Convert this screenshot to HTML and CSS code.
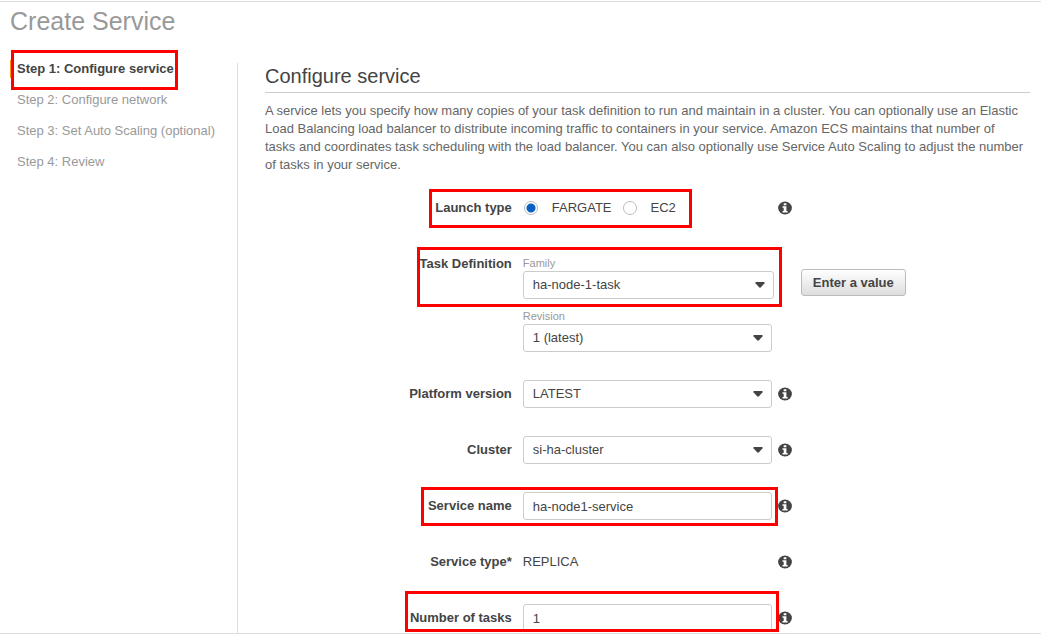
FILE: index.html
```html
<!DOCTYPE html>
<html lang="en">
<head>
<meta charset="utf-8">
<title>Create Service</title>
<link rel="stylesheet" href="styles.css">
</head>
<body>
<svg class="defs" aria-hidden="true">
  <symbol id="info" viewBox="0 0 14 14">
    <ellipse cx="7" cy="7" rx="6.9" ry="6.5" fill="#444"/>
    <path d="M5.700 2.200h2.700v2H5.700zM4.500 5.200h3.900v4.700h1.200v1.600H4.500V9.900h1.200V6.800H4.500z" fill="#fff"/>
  </symbol>
  <symbol id="caret" viewBox="0 0 10 6">
    <path d="M1 0h8q1 .2.500 1.200L6 5.200q-1 .9-2 0L.5 1.200Q0 .2 1 0z" fill="#444"/>
  </symbol>
</svg>
<div class="page">
  <h1 class="title">Create Service</h1>
  <div class="columns">
    <nav class="steps" aria-label="Steps">
      <ol class="step-list">
        <li class="step step-current" aria-current="step">Step 1: Configure service<span class="mark mark-step"></span></li>
        <li class="step">Step 2: Configure network</li>
        <li class="step">Step 3: Set Auto Scaling (optional)</li>
        <li class="step">Step 4: Review</li>
      </ol>
    </nav>
    <main class="content">
      <h2 class="heading">Configure service</h2>
      <p class="intro">A service lets you specify how many copies of your task definition to run and maintain in a cluster. You can optionally use an Elastic Load Balancing load balancer to distribute incoming traffic to containers in your service. Amazon ECS maintains that number of tasks and coordinates task scheduling with the load balancer. You can also optionally use Service Auto Scaling to adjust the number of tasks in your service.</p>
      <form class="form">
        <div class="row" role="radiogroup" aria-labelledby="launch">
          <span class="label" id="launch">Launch type</span>
          <div class="field radios">
            <label class="choice"><input class="radio" type="radio" name="launch" checked>FARGATE</label>
            <label class="choice"><input class="radio" type="radio" name="launch">EC2</label>
          </div>
          <svg class="info"><use href="#info"/></svg>
          <span class="mark mark-launch"></span>
        </div>
        <div class="row row-group">
          <span class="label">Task Definition</span>
          <div class="field stack">
            <div>
              <label class="sublabel" for="family">Family</label>
              <div class="select-wrap select-wide">
                <select class="control" id="family"><option>ha-node-1-task</option></select>
                <svg class="caret"><use href="#caret"/></svg>
              </div>
            </div>
            <div>
              <label class="sublabel" for="revision">Revision</label>
              <div class="select-wrap">
                <select class="control" id="revision"><option>1 (latest)</option></select>
                <svg class="caret"><use href="#caret"/></svg>
              </div>
            </div>
          </div>
          <button class="button" type="button">Enter a value</button>
          <span class="mark mark-task"></span>
        </div>
        <div class="row">
          <label class="label" for="platform">Platform version</label>
          <div class="field select-wrap">
            <select class="control" id="platform"><option>LATEST</option></select>
            <svg class="caret"><use href="#caret"/></svg>
          </div>
          <svg class="info"><use href="#info"/></svg>
        </div>
        <div class="row">
          <label class="label" for="cluster">Cluster</label>
          <div class="field select-wrap">
            <select class="control" id="cluster"><option>si-ha-cluster</option></select>
            <svg class="caret"><use href="#caret"/></svg>
          </div>
          <svg class="info"><use href="#info"/></svg>
        </div>
        <div class="row">
          <label class="label" for="name">Service name</label>
          <div class="field"><input class="control" id="name" type="text" value="ha-node1-service"></div>
          <svg class="info"><use href="#info"/></svg>
          <span class="mark mark-name"></span>
        </div>
        <div class="row">
          <span class="label">Service type*</span>
          <span class="field">REPLICA</span>
          <svg class="info"><use href="#info"/></svg>
        </div>
        <div class="row">
          <label class="label" for="tasks">Number of tasks</label>
          <div class="field"><input class="control" id="tasks" type="text" value="1"></div>
          <svg class="info"><use href="#info"/></svg>
          <span class="mark mark-tasks"></span>
        </div>
      </form>
    </main>
  </div>
</div>
</body>
</html>
```
FILE: styles.css
```css
* { box-sizing: border-box; }

body {
  margin: 0;
  background: #fff;
  color: #444;
  font: 13px/18px "Liberation Sans", Arial, sans-serif;
}

.defs { display: none; }

.page {
  display: flex;
  flex-direction: column;
  min-height: calc(100vh - 1px);
  margin-top: 1px;
  border-top: 1px solid #ddd;
  border-bottom: 1px solid #ddd;
}

.title {
  margin: 0;
  padding: 4px 10px 27px;
  color: #999;
  font-size: 25px;
  font-weight: normal;
  line-height: 30px;
}

.columns { display: flex; flex: 1; }

.steps { flex: none; width: 237px; padding-left: 10px; }

.step-list {
  display: flex;
  flex-direction: column;
  gap: 13px;
  margin: -3px 0 0;
  padding: 0;
  list-style: none;
}

.step {
  position: relative;
  padding-left: 7px;
  color: #999;
}

.step-current {
  padding-left: 5px;
  border-left: 2px solid #f90;
  color: #444;
  font-weight: bold;
}

.content {
  flex: 1;
  min-width: 0;
  padding: 0 11px 1px 27px;
  border-left: 1px solid #ddd;
}

.heading {
  margin: 0;
  padding-bottom: 3px;
  border-bottom: 1px solid #ccc;
  font-size: 20px;
  font-weight: normal;
  line-height: 26px;
}

.intro {
  margin: 9px 0 20px;
  padding-right: 4px;
  color: #666;
}

.form {
  display: flex;
  flex-direction: column;
  gap: 28px;
}

.row {
  position: relative;
  display: flex;
  align-items: center;
  min-height: 28px;
}

.row-group { align-items: flex-start; padding-top: 6px; }
.row-group .label { line-height: 16px; }

.label {
  flex: none;
  width: calc(32% + 2px);
  margin-right: 11px;
  font-weight: bold;
  text-align: right;
}

.field { flex: none; width: 249px; }

.radios { display: flex; gap: 11px; padding-left: 1px; }
.choice { display: flex; align-items: center; gap: 14px; }

.radio {
  appearance: none;
  width: 14px;
  height: 14px;
  margin: 0;
  border: 1px solid #bbb;
  border-radius: 50%;
  background: #fff;
}

.radio:checked {
  background: radial-gradient(circle, #0a5fc2 4px, #fff 5px);
}

.stack { display: flex; flex-direction: column; gap: 10px; }

.sublabel {
  display: block;
  padding-bottom: 1px;
  color: #999;
  font-size: 11px;
  line-height: 14px;
}

.select-wrap { position: relative; }
.select-wide { width: 251px; }

.control {
  display: block;
  appearance: none;
  width: 100%;
  height: 28px;
  margin: 0;
  padding: 0 9px;
  border: 1px solid #ccc;
  border-radius: 3px;
  background: #fff;
  color: #444;
  font: inherit;
}

.caret {
  position: absolute;
  top: 11px;
  right: 9px;
  width: 10px;
  height: 6px;
  pointer-events: none;
}

.info { flex: none; width: 14px; height: 14px; margin-left: 6px; }

.button {
  height: 27px;
  margin: 13px 0 0 29px;
  padding: 0 11px;
  border: 1px solid #bbb;
  border-radius: 3px;
  background: linear-gradient(#fff, #ddd);
  color: #444;
  font: inherit;
  font-weight: bold;
}

/* Highlight frames drawn over the form */
.mark {
  position: absolute;
  border: 3px solid #f00;
  pointer-events: none;
}

.mark-step { top: -10px; left: -1px; width: 167px; height: 40px; }
.mark-launch { top: -5px; left: calc(32% - 81px); width: 263px; height: 39px; }
.mark-task { top: -3px; left: calc(32% - 93px); width: 365px; height: 60px; }
.mark-name { top: -5px; left: calc(32% - 89px); width: 357px; height: 39px; }
.mark-tasks { top: -13px; left: calc(32% - 105px); width: 374px; height: 41px; }
```
